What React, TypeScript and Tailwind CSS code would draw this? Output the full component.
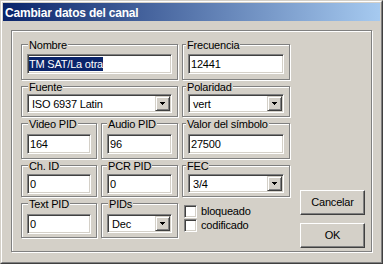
const etched = "border border-[#808080] shadow-[inset_1px_1px_0_#fff,1px_1px_0_#fff]";
const sunken =
  "border border-t-[#808080] border-l-[#808080] border-r-white border-b-white shadow-[inset_1px_1px_0_#404040,inset_-1px_-1px_0_#d4d0c8]";
const raised =
  "border border-t-white border-l-white border-r-[#404040] border-b-[#404040] shadow-[inset_-1px_-1px_0_#808080]";
const dropBtn =
  "border border-t-[#d4d0c8] border-l-[#d4d0c8] border-r-[#404040] border-b-[#404040] shadow-[inset_1px_1px_0_#fff,inset_-1px_-1px_0_#808080]";

function Group({
  label,
  className,
  legend,
  children,
}: {
  label: string;
  className: string;
  legend: string;
  children: React.ReactNode;
}) {
  return (
    <div className={`relative px-[5px] ${etched} ${className}`}>
      <span className={`absolute top-[-6px] px-[1px] leading-[13px] bg-[#d4d0c8] whitespace-nowrap ${legend}`}>
        {label}
      </span>
      {children}
    </div>
  );
}

function Field({ value, selected }: { value: string; selected?: boolean }) {
  return (
    <div className={`h-[20px] bg-white pl-[1px] flex items-center ${sunken}`}>
      {selected ? (
        <span className="bg-[#0a246a] text-white leading-[14px]">{value}</span>
      ) : (
        <span className="leading-[14px] pl-[1px]">{value}</span>
      )}
    </div>
  );
}

function Combo({ value }: { value: string }) {
  return (
    <div className={`h-[19px] bg-white p-[1px] flex items-center ${sunken}`}>
      <span className="flex-1 pl-[3px] leading-[14px]">{value}</span>
      <div className={`w-[15px] h-[15px] bg-[#d4d0c8] flex items-center justify-center ${dropBtn}`}>
        <svg width="5" height="3" viewBox="0 0 5 3" shapeRendering="crispEdges">
          <rect x="0" y="0" width="5" height="1" fill="#000" />
          <rect x="1" y="1" width="3" height="1" fill="#000" />
          <rect x="2" y="2" width="1" height="1" fill="#000" />
        </svg>
      </div>
    </div>
  );
}

function Check({ label }: { label: string }) {
  return (
    <div className="flex items-center">
      <div className={`w-[13px] h-[13px] bg-white ${sunken}`} />
      <span className="ml-[4px] leading-[13px]">{label}</span>
    </div>
  );
}

export default function App() {
  return (
    <div className="w-[383px] h-[264px] bg-[#d4d0c8] text-black text-[11px] tracking-[-0.2px] font-['Liberation_Sans',Arial,sans-serif] border border-t-[#d4d0c8] border-l-[#d4d0c8] border-r-[#404040] border-b-[#404040]">
      <div className="h-full p-[1px] flex flex-col border border-t-white border-l-white border-r-[#808080] border-b-[#808080]">
        <div className="h-[18px] shrink-0 bg-linear-to-r/srgb from-[#0a246a] to-[#a6caf0] pl-[2px] pt-[1px] flex items-center">
          <span className="text-white font-bold text-[12px] leading-[16px]">Cambiar datos del canal</span>
        </div>

        <div className={`mt-[9px] mx-[8px] h-[222px] flex ${etched}`}>
          <div className="pl-[9px] pt-[13px] flex flex-col">
            <div className="flex gap-[4px]">
              <Group label="Nombre" legend="left-[6px]" className="w-[157px] h-[36px] pt-[9px]">
                <Field value="TM SAT/La otra" selected />
              </Group>
              <Group label="Frecuencia" legend="left-[3px]" className="w-[108px] h-[36px] pt-[9px]">
                <Field value="12441" />
              </Group>
            </div>

            <div className="flex gap-[4px] mt-[6px]">
              <Group label="Fuente" legend="left-[6px]" className="w-[157px] h-[31px] pt-[7px]">
                <Combo value="ISO 6937 Latin" />
              </Group>
              <Group label="Polaridad" legend="left-[3px]" className="w-[108px] h-[31px] pt-[7px]">
                <Combo value="vert" />
              </Group>
            </div>

            <div className="flex gap-[4px] mt-[6px]">
              <Group label="Video PID" legend="left-[6px]" className="w-[76px] h-[36px] pt-[10px]">
                <Field value="164" />
              </Group>
              <Group label="Audio PID" legend="left-[5px]" className="w-[77px] h-[36px] pt-[10px]">
                <Field value="96" />
              </Group>
              <Group label="Valor del símbolo" legend="left-[3px]" className="w-[108px] h-[36px] pt-[10px]">
                <Field value="27500" />
              </Group>
            </div>

            <div className="flex gap-[4px] mt-[6px]">
              <Group label="Ch. ID" legend="left-[6px]" className="w-[76px] h-[32px] pt-[8px]">
                <Field value="0" />
              </Group>
              <Group label="PCR PID" legend="left-[5px]" className="w-[77px] h-[32px] pt-[8px]">
                <Field value="0" />
              </Group>
              <Group label="FEC" legend="left-[3px]" className="w-[108px] h-[32px] pt-[8px]">
                <Combo value="3/4" />
              </Group>
            </div>

            <div className="flex gap-[4px] mt-[6px]">
              <Group label="Text PID" legend="left-[6px]" className="w-[76px] h-[35px] pt-[10px]">
                <Field value="0" />
              </Group>
              <Group label="PIDs" legend="left-[6px]" className="w-[77px] h-[35px] pt-[10px]">
                <Combo value="Dec" />
              </Group>
              <div className="w-[108px] pl-[2px] pt-[2px] flex flex-col gap-[1px]">
                <Check label="bloqueado" />
                <Check label="codificado" />
              </div>
            </div>
          </div>

          <div className="ml-[10px] mb-[3px] self-end flex flex-col gap-[8px]">
            <button className={`w-[65px] h-[25px] bg-[#d4d0c8] ${raised}`}>Cancelar</button>
            <button className={`w-[65px] h-[25px] bg-[#d4d0c8] ${raised}`}>OK</button>
          </div>
        </div>
      </div>
    </div>
  );
}
